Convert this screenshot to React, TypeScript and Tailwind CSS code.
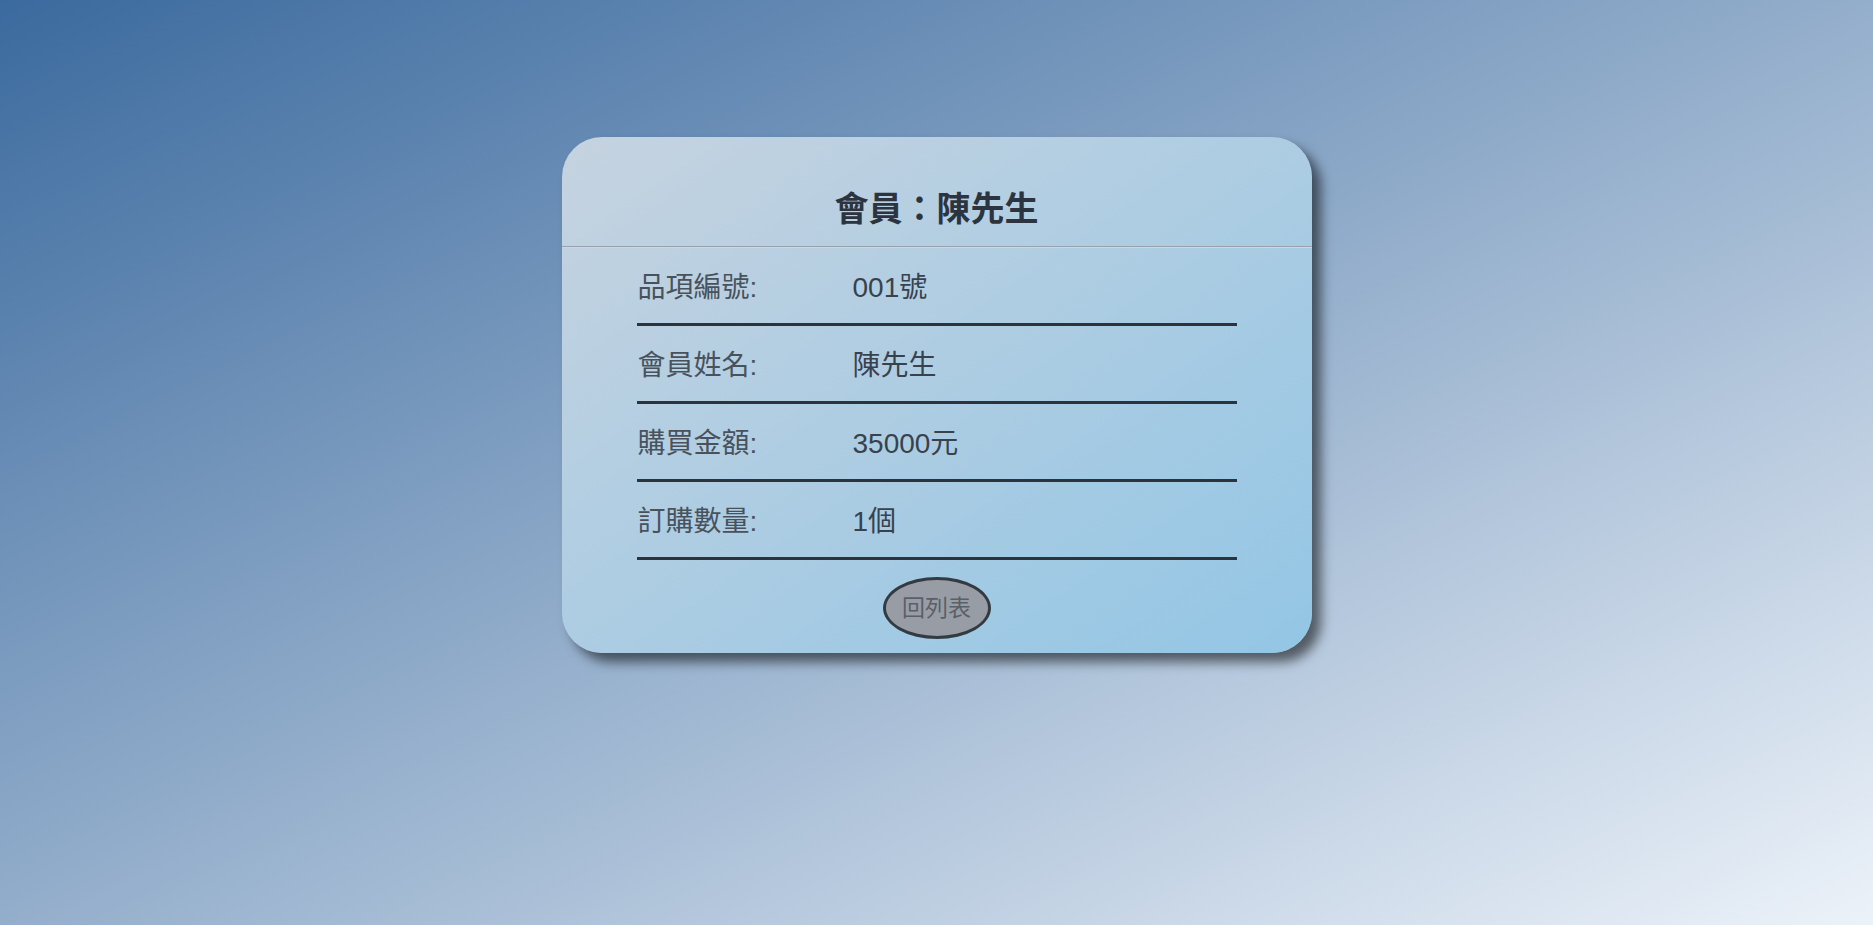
import React from "react";

const rows = [
  { label: "品項編號:", value: "001號" },
  { label: "會員姓名:", value: "陳先生" },
  { label: "購買金額:", value: "35000元" },
  { label: "訂購數量:", value: "1個" },
];

const App: React.FC = () => {
  return (
    <div
      className="w-full min-h-screen bg-[linear-gradient(to_bottom_right,#3b6a9e,#ecf2f9)] pt-[137px]"
      style={{ fontFamily: '"Liberation Sans", "Noto Sans CJK TC", sans-serif' }}
    >
      {/* card */}
      <div className="mx-auto w-[750px] rounded-[40px] bg-[linear-gradient(to_bottom_right,#c6d3e0,#93c6e5)] shadow-[9px_9px_12px_rgba(0,0,0,0.55)] pb-[14px]">
        {/* title */}
        <div className="pt-[52px] pb-[17px] text-center">
          <h1 className="text-[34px] leading-[40px] font-bold text-[#2c353f]">會員：陳先生</h1>
        </div>
        <div className="h-[2px] border-t border-[#97a2ac] border-b border-b-[#cbd7e2]"></div>

        {/* detail rows */}
        <div className="px-[75px]">
          {rows.map((r) => (
            <div
              key={r.label}
              className="flex pt-[24px] pb-[19px] border-b-[3px] border-[#2c333b] text-[28px] leading-[32px]"
            >
              <span className="w-[216px] pl-[1px] text-[#48525d]">{r.label}</span>
              <span className="text-[#38424d]">{r.value}</span>
            </div>
          ))}
        </div>

        {/* back button */}
        <div className="flex justify-center mt-[17px]">
          <button className="w-[108px] h-[62px] rounded-[50%] border-[3px] border-[#343a41] bg-[#989da5] text-[23px] text-[#5a6068]">
            回列表
          </button>
        </div>
      </div>
    </div>
  );
};

export default App;
